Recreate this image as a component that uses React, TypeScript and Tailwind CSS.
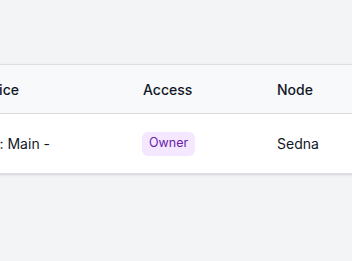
export default function App() {
  return (
    <div
      className="w-[352px] h-[261px] overflow-hidden bg-[#f3f4f6] pt-16"
      style={{ fontFamily: "Inter, 'Noto Sans', sans-serif" }}
    >
      <div className="ml-[-27px] w-[420px] bg-white border-y border-[#dcdee2] shadow-sm">
        <div className="flex h-[49px] items-center bg-[#f8f9fb] border-b border-[#d9dbdf] text-[14px] font-medium text-[#111827]">
          <div className="w-[170px]">Device</div>
          <div className="w-[134px]">Access</div>
          <div className="flex-1">Node</div>
        </div>
        <div className="flex h-[59px] items-center text-[14px] text-[#111827]">
          <div className="w-[170px]">
            <span className="-ml-[2px]">Mac: Main -</span>
          </div>
          <div className="w-[134px]">
            <span className="-ml-px inline-flex h-6 items-center rounded-md bg-[#f3e8ff] px-[7px] text-[12.5px] text-[#6b21a8]">
              Owner
            </span>
          </div>
          <div className="flex-1">Sedna</div>
        </div>
      </div>
    </div>
  );
}
